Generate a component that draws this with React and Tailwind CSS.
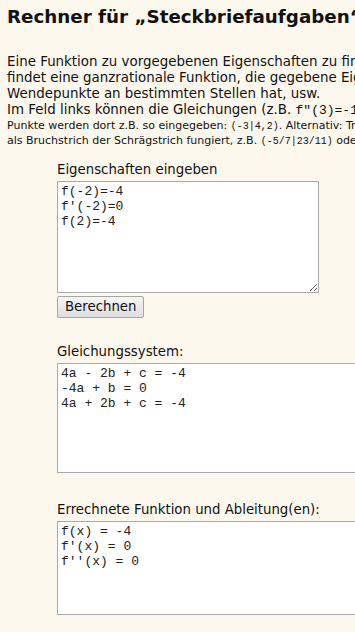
import React from 'react';

export default function App() {
  const mono = 'font-["Liberation_Mono",monospace]';

  return (
    <div className='w-[355px] h-[632px] overflow-hidden bg-[#fdf8ee] text-[#111] font-["DejaVu_Sans",Verdana,sans-serif]'>
      <div className="w-[700px] pl-[7px]">
        <h1 className="text-[18.3px] leading-[22px] font-bold pt-[6px] whitespace-nowrap">
          Rechner für „Steckbriefaufgaben“
        </h1>

        {/* Intro text */}
        <div className="mt-[26px] text-[13.4px] leading-[16px] whitespace-nowrap">
          <div>Eine Funktion zu vorgegebenen Eigenschaften zu finden, ist das Ziel von Steckbriefaufgaben.</div>
          <div>findet eine ganzrationale Funktion, die gegebene Eigenschaften hat, z.B. die Extrempunkte oder</div>
          <div>Wendepunkte an bestimmten Stellen hat, usw.</div>
          <div>
            Im Feld links können die Gleichungen (z.B. <span className={`${mono} text-[13px]`}>f"(3)=-1</span>) eingegeben werden.
          </div>
        </div>
        <div className="text-[11px] leading-[14px] whitespace-nowrap">
          <div>
            Punkte werden dort z.B. so eingegeben: <span className={`${mono} text-[10px]`}>(-3|4,2)</span>. Alternativ: Tritt ein Bruch auf, wobei
          </div>
          <div>
            als Bruchstrich der Schrägstrich fungiert, z.B. <span className={`${mono} text-[10px]`}>(-5/7|23/11)</span> oder ähnlich.
          </div>
        </div>

        {/* Form */}
        <div className="pl-[50px] mt-[13px] text-[13.3px]">
          <div className="leading-[16px]">Eigenschaften eingeben</div>
          <textarea
            readOnly
            value={"f(-2)=-4\nf'(-2)=0\nf(2)=-4"}
            className={`${mono} block mt-[3px] w-[262px] h-[112px] bg-white border border-[#a9a9a9] px-[3px] py-[2px] text-[13px] leading-[15px] text-[#222] outline-none`}
          />
          <button className="mt-[3px] h-[22px] px-[7px] text-[13.3px] rounded-[2px] border border-[#a6a6a6] bg-gradient-to-b from-[#f6f6f6] to-[#dedede] text-[#111]">
            Berechnen
          </button>

          <div className="mt-[26px] leading-[16px]">Gleichungssystem:</div>
          <textarea
            readOnly
            value={"4a - 2b + c = -4\n-4a + b = 0\n4a + 2b + c = -4"}
            className={`${mono} block mt-[3px] w-[400px] h-[110px] bg-white border border-[#a9a9a9] px-[3px] py-[2px] text-[13px] leading-[15px] text-[#222] outline-none`}
          />

          <div className="mt-[29px] leading-[16px]">Errechnete Funktion und Ableitung(en):</div>
          <textarea
            readOnly
            value={"f(x) = -4\nf'(x) = 0\nf''(x) = 0"}
            className={`${mono} block mt-[3px] w-[400px] h-[94px] bg-white border border-[#a9a9a9] px-[3px] py-[2px] text-[13px] leading-[15px] text-[#222] outline-none`}
          />
        </div>
      </div>
    </div>
  );
}
